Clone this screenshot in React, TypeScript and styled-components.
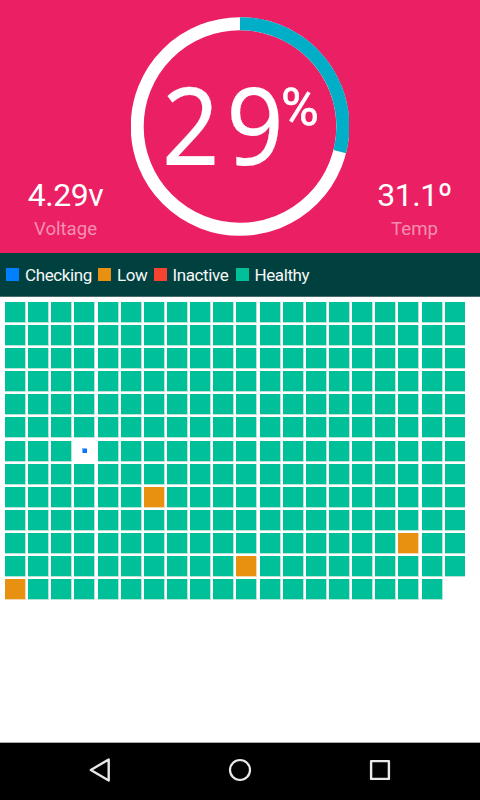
import React from "react";
import styled, { createGlobalStyle } from "styled-components";

const GlobalStyle = createGlobalStyle`
  * { box-sizing: border-box; }
  body { margin: 0; background: #fff; font-family: Roboto, sans-serif; }
`;

const Screen = styled.div`
  width: 480px;
  height: 800px;
  display: flex;
  flex-direction: column;
  overflow: hidden;
  background: #fff;
`;

const Header = styled.header`
  height: 253px;
  flex: none;
  display: grid;
  grid-template-columns: 131px 218px 131px;
  background: #eb1f63;
  color: #fff;
`;

const Stat = styled.div`
  display: flex;
  flex-direction: column;
  align-items: center;
  padding-top: 176px;
  white-space: nowrap;
`;

const StatValue = styled.div`
  font-size: 32px;
  line-height: 38px;
  letter-spacing: -0.5px;
`;

const StatLabel = styled.div`
  margin-top: 4px;
  font-size: 18.6px;
  line-height: 22px;
  color: #f58fb1;
`;

const Gauge = styled.div`
  position: relative;
  height: 219px;
  margin-top: 17px;
`;

const Ring = styled.svg`
  display: block;
`;

const Reading = styled.div`
  position: absolute;
  inset: 0;
  display: flex;
  align-items: flex-start;
`;

const Digits = styled.span`
  flex: none;
  margin: 67px 0 0 30.5px;
  width: 119px;
  font-family: "Noto Sans", sans-serif;
  font-size: 108px;
  line-height: 80px;
  letter-spacing: 7.2px;
  -webkit-text-stroke: 0.2px #fff;
  white-space: nowrap;
  transform: scaleX(0.93);
  transform-origin: left;
`;

const Percent = styled.span`
  margin-top: 72px;
  font-size: 51px;
  line-height: 38px;
  -webkit-text-stroke: 0.7px #fff;
  transform: scaleX(1.01);
  transform-origin: left;
`;

const Legend = styled.div`
  height: 44px;
  flex: none;
  display: flex;
  align-items: center;
  padding-left: 6px;
  gap: 6px;
  background: #00403f;
  border-bottom: 1px solid #476d6c;
`;

const LegendItem = styled.div<{ $width: number }>`
  width: ${(p) => p.$width}px;
  display: flex;
  align-items: center;
  gap: 6px;
  font-size: 17px;
  line-height: 22px;
  letter-spacing: -0.4px;
  color: #f5f8f7;
  white-space: nowrap;
`;

const Swatch = styled.span<{ $color: string }>`
  width: 13px;
  height: 13px;
  flex: none;
  background: ${(p) => p.$color};
`;

const CellGrid = styled.main`
  flex: 1;
  display: grid;
  grid-template-columns: repeat(20, 20px);
  grid-auto-rows: 20px;
  align-content: start;
  column-gap: 3.15px;
  row-gap: 3.1px;
  padding: 5px 0 0 5px;
`;

const Cell = styled.div<{ $color: string; $edge: string }>`
  background: ${(p) => p.$color};
  box-shadow: 1px 0 ${(p) => p.$edge}, 0 1px ${(p) => p.$edge}, 1px 1px ${(p) => p.$edge};

  &:nth-child(20n) {
    box-shadow: 0 1px ${(p) => p.$edge};
  }
`;

const CheckingCell = styled.div`
  display: grid;
  place-items: center;
`;

const CheckingDot = styled.span`
  width: 4px;
  height: 4px;
  margin-left: 1px;
  background: #0b78fb;
  box-shadow: -0.5px -0.5px 0 0.5px #7fb5fa;
`;

const NavBar = styled.nav`
  height: 58px;
  flex: none;
  display: grid;
  grid-template-columns: repeat(3, 140px);
  justify-content: center;
  background: #000;
  border-top: 1px solid #aaa;
`;

const NavButton = styled.button`
  display: flex;
  justify-content: center;
  padding: 11px 0 0;
  border: 0;
  background: none;
`;

const LEGEND = [
  { label: "Checking", color: "#0080ff", width: 86 },
  { label: "Low", color: "#e8900f", width: 49.5 },
  { label: "Inactive", color: "#f44331", width: 76 },
  { label: "Healthy", color: "#00c09a", width: 80 },
];

const LOW = new Set([166, 217, 230, 240]);
const CHECKING = 123;
const CELLS = Array.from({ length: 259 }, (_, i) => i);

const Back = () => (
  <svg width="32" height="32" viewBox="0 0 32 32" fill="none" stroke="#e8e8e8" strokeWidth="2.4" strokeLinejoin="round">
    <path d="M24.7 5.5V26.5L6.8 16Z" />
  </svg>
);

const Home = () => (
  <svg width="32" height="32" viewBox="0 0 32 32" fill="none" stroke="#e8e8e8" strokeWidth="2.2">
    <circle cx="16" cy="16" r="10" />
  </svg>
);

const Recent = () => (
  <svg width="32" height="32" viewBox="0 0 32 32" fill="none" stroke="#e8e8e8" strokeWidth="2.4" strokeLinejoin="round">
    <rect x="7.1" y="7.1" width="17.8" height="17.8" />
  </svg>
);

export default function App() {
  return (
    <Screen>
      <GlobalStyle />
      <Header>
        <Stat>
          <StatValue>4.29v</StatValue>
          <StatLabel>Voltage</StatLabel>
        </Stat>
        <Gauge>
          <Ring width="218" height="219" viewBox="0 0 218 219" fill="none" strokeWidth="13">
            <circle cx="109" cy="109.5" r="102.8" stroke="#fff" />
            <path d="M109 6.7A102.8 102.8 0 0 1 208.8 134.6" stroke="#00aec7" />
          </Ring>
          <Reading>
            <Digits>29</Digits>
            <Percent>%</Percent>
          </Reading>
        </Gauge>
        <Stat>
          <StatValue>31.1º</StatValue>
          <StatLabel>Temp</StatLabel>
        </Stat>
      </Header>
      <Legend>
        {LEGEND.map((item) => (
          <LegendItem key={item.label} $width={item.width}>
            <Swatch $color={item.color} />
            {item.label}
          </LegendItem>
        ))}
      </Legend>
      <CellGrid>
        {CELLS.map((i) =>
          i === CHECKING ? (
            <CheckingCell key={i}>
              <CheckingDot />
            </CheckingCell>
          ) : (
            <Cell
              key={i}
              $color={LOW.has(i) ? "#e8900f" : "#00c09a"}
              $edge={LOW.has(i) ? "#f7d9ae" : "#b8e4d8"}
            />
          )
        )}
      </CellGrid>
      <NavBar>
        <NavButton aria-label="Back"><Back /></NavButton>
        <NavButton aria-label="Home"><Home /></NavButton>
        <NavButton aria-label="Recent apps"><Recent /></NavButton>
      </NavBar>
    </Screen>
  );
}
